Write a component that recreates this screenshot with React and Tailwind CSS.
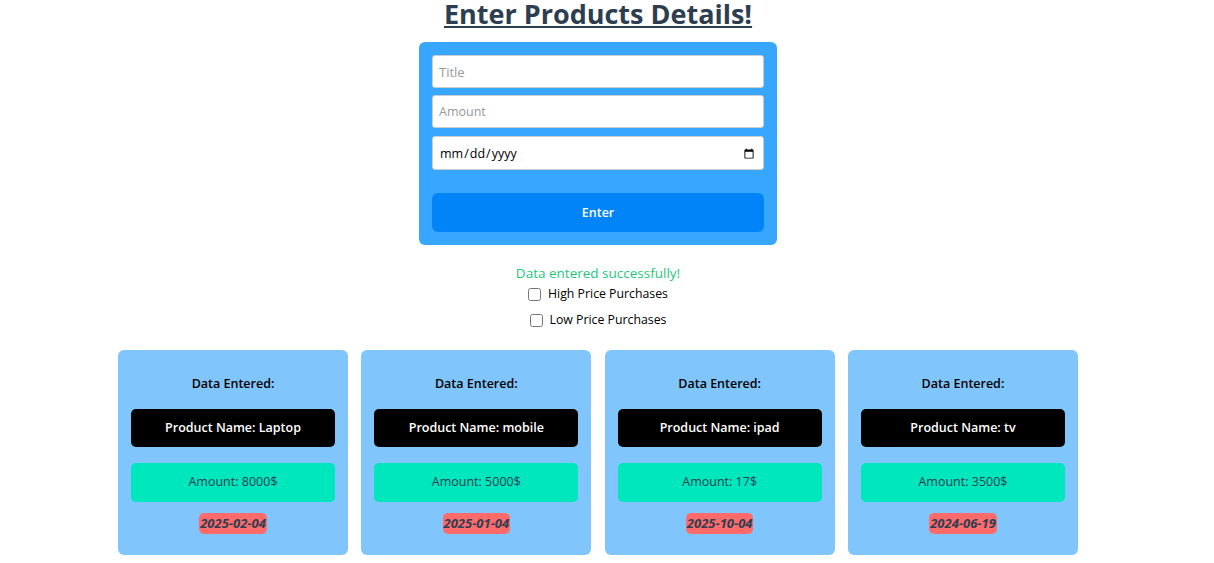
import React, { useState } from 'react';

const products = [
  { id: 1, title: 'Laptop', amount: 8000, date: '2025-02-04' },
  { id: 2, title: 'mobile', amount: 5000, date: '2025-01-04' },
  { id: 3, title: 'ipad', amount: 17, date: '2025-10-04' },
  { id: 4, title: 'tv', amount: 3500, date: '2024-06-19' },
];

function ProductCard({ item }) {
  return (
    <div className="w-[230px] h-[205px] bg-[#80c6fc] rounded-[6px] px-[13px] pt-[26px] flex flex-col items-center">
      <p className="text-[12.5px] font-semibold text-black leading-[16px]">Data Entered:</p>
      <div className="mt-[17px] w-full h-[38px] bg-black rounded-[5px] flex items-center justify-center text-white text-[12.5px] font-semibold">
        Product Name: {item.title}
      </div>
      <div className="mt-[16px] w-full h-[39px] bg-[#00e6bd] rounded-[5px] flex items-center justify-center text-[#2c3e50] text-[12.5px]">
        Amount: {item.amount}$
      </div>
      <span className="mt-[11px] h-[21px] px-[1px] bg-[#ff6b6b] rounded-[5px] flex items-center text-[13px] font-bold italic text-[#2c3e50]">
        {item.date}
      </span>
    </div>
  );
}

export default function App() {
  const [title, setTitle] = useState('');
  const [amount, setAmount] = useState('');
  const [date, setDate] = useState('');

  return (
    <div className="w-[1196px] min-h-screen bg-white flex flex-col items-center font-['Open_Sans',sans-serif]">
      <h1 className="mt-[-4px] text-[27px] font-bold underline leading-[36px] text-[#2c3e50]">
        Enter Products Details!
      </h1>

      <form
        onSubmit={e => e.preventDefault()}
        className="mt-[10px] w-[358px] bg-[#36a7fd] rounded-[6px] p-[13px] flex flex-col"
      >
        <input
          type="text"
          value={title}
          onChange={e => setTitle(e.target.value)}
          placeholder="Title"
          className="h-[33px] bg-white border border-[#ccc] rounded-[3px] px-[6px] text-[13px] placeholder:text-[#999]"
        />
        <input
          type="number"
          value={amount}
          onChange={e => setAmount(e.target.value)}
          placeholder="Amount"
          className="mt-[7px] h-[33px] bg-white border border-[#ccc] rounded-[3px] px-[6px] text-[12.5px] placeholder:text-[#999]"
        />
        <input
          type="date"
          value={date}
          onChange={e => setDate(e.target.value)}
          className="mt-[8px] h-[34px] bg-white border border-[#ccc] rounded-[3px] px-[6px] pt-[2px] text-[12.5px] text-black"
        />
        <button
          type="submit"
          className="mt-[23px] h-[39px] bg-[#0084f7] rounded-[6px] text-white text-[12.5px] font-semibold pt-[2px]"
        >
          Enter
        </button>
      </form>

      <p className="mt-[19px] text-[13.5px] leading-[18px] text-[#1fc77c]">Data entered successfully!</p>
      <label className="mt-[2px] flex items-center gap-[7px] text-[12.3px] text-black h-[20px]">
        <input type="checkbox" className="w-[13px] h-[13px]" />
        High Price Purchases
      </label>
      <label className="mt-[6px] flex items-center gap-[7px] text-[12.3px] text-black h-[20px]">
        <input type="checkbox" className="w-[13px] h-[13px]" />
        Low Price Purchases
      </label>

      <div className="mt-[20px] w-[960px] flex justify-between">
        {products.map(p => (
          <ProductCard key={p.id} item={p} />
        ))}
      </div>
    </div>
  );
}
